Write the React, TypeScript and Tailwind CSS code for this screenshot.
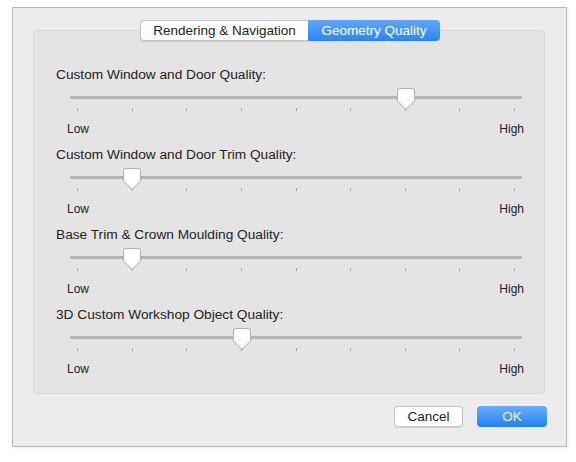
import React from "react";

type SliderSpec = { label: string; value: number };

const sliders: SliderSpec[] = [
  { label: "Custom Window and Door Quality:", value: 6 },
  { label: "Custom Window and Door Trim Quality:", value: 1 },
  { label: "Base Trim & Crown Moulding Quality:", value: 1 },
  { label: "3D Custom Workshop Object Quality:", value: 3 },
];

const TICKS = 9;
const TRACK_W = 452;
const INSET = 7;
const STEP = (TRACK_W - INSET * 2) / (TICKS - 1);

function Thumb() {
  return (
    <svg width="18" height="22" viewBox="0 0 18 22" className="block">
      <path
        d="M3 0.5 H15 A2.5 2.5 0 0 1 17.5 3 V13 L9 21.3 L0.5 13 V3 A2.5 2.5 0 0 1 3 0.5 Z"
        fill="#ffffff"
        stroke="#b0b0b0"
        strokeWidth="1"
      />
    </svg>
  );
}

function TickSlider({ label, value }: SliderSpec) {
  const center = INSET + value * STEP;
  return (
    <div className="h-[80px] px-[22px]">
      <div className="h-4 text-[13.7px] leading-4 text-[#222222]">{label}</div>
      <div className="relative mt-1 ml-[14px] h-6 w-[452px]">
        <div className="absolute left-0 right-0 top-[9px] h-[3px] rounded-full bg-[#b4b4b4]" />
        <div className="absolute left-0 right-0 top-[21px] flex h-[3px] justify-between px-[7px]">
          {Array.from({ length: TICKS }).map((_, i) => (
            <div key={i} className="h-[3px] w-px bg-[#a2a2a2]" />
          ))}
        </div>
        <div
          className="absolute top-[1px] drop-shadow-[0_0.5px_0.5px_rgba(0,0,0,0.15)]"
          style={{ left: center - 8.5 }}
        >
          <Thumb />
        </div>
      </div>
      <div className="mt-[11px] ml-[11px] mr-[-2px] flex h-[15px] justify-between text-[12px] leading-[15px] text-[#222222]">
        <span>Low</span>
        <span>High</span>
      </div>
    </div>
  );
}

export default function App() {
  return (
    <div
      className="h-[462px] w-[576px] bg-white pl-[12px] pt-[7px]"
      style={{ fontFamily: '"Liberation Sans", Arial, sans-serif' }}
    >
      <div className="flex h-[440px] w-[555px] flex-col border border-[#b9b9b9] bg-[#ececec] shadow-[1px_1px_2px_rgba(0,0,0,0.08)]">
        <div className="relative ml-[20px] mt-[22px] h-[364px] w-[512px] rounded-[3px] border border-[#d8d8d8] bg-[#e4e4e4] pt-[36px]">
          <div className="absolute left-[106px] top-[-11px] flex h-[21px] text-[13.5px] leading-[19px]">
            <div className="flex w-[168px] items-center justify-center rounded-l-[4px] border border-r-0 border-[#c4c4c4] bg-white text-[#222222] shadow-[0_0.5px_1px_rgba(0,0,0,0.1)]">
              Rendering &amp; Navigation
            </div>
            <div className="flex w-[132px] items-center justify-center rounded-r-[4px] bg-gradient-to-b from-[#5fa6f8] to-[#2a85f5] text-white">
              Geometry Quality
            </div>
          </div>
          {sliders.map((s) => (
            <TickSlider key={s.label} label={s.label} value={s.value} />
          ))}
        </div>
        <div className="mt-[12px] flex justify-end gap-[14px] pr-[19px]">
          <button className="h-[21px] w-[69px] rounded-[4px] border border-[#c4c4c4] bg-white text-[13.5px] leading-[19px] text-[#222222] shadow-[0_0.5px_1px_rgba(0,0,0,0.1)]">
            Cancel
          </button>
          <button className="h-[21px] w-[70px] rounded-[4px] bg-gradient-to-b from-[#67aefa] to-[#1f7ff5] text-[13.5px] leading-[21px] text-[#eef5ff]">
            OK
          </button>
        </div>
      </div>
    </div>
  );
}
